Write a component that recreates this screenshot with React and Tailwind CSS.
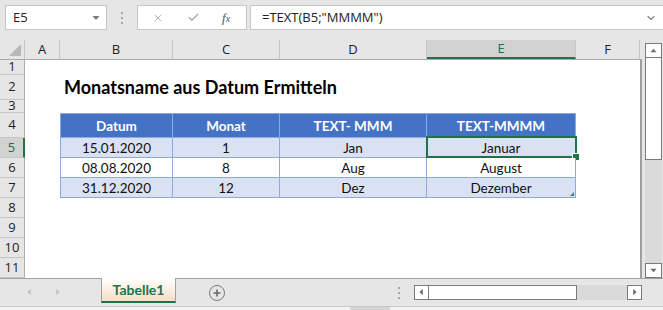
import { X, Check, ChevronDown } from 'lucide-react'

const COLS = [
  { id: 'A', w: 'w-[35px]' },
  { id: 'B', w: 'w-[113px]' },
  { id: 'C', w: 'w-[107px]' },
  { id: 'D', w: 'w-[147px]' },
  { id: 'E', w: 'w-[149px]' },
  { id: 'F', w: 'w-[64px]' },
]

const ROWS = [
  { n: 1, h: 'h-[15px]' },
  { n: 2, h: 'h-[25px]' },
  { n: 3, h: 'h-[13px]' },
  { n: 4, h: 'h-[25px]' },
  { n: 5, h: 'h-[20px]' },
  { n: 6, h: 'h-[20px]' },
  { n: 7, h: 'h-[20px]' },
  { n: 8, h: 'h-[20px]' },
  { n: 9, h: 'h-[20px]' },
  { n: 10, h: 'h-[20px]' },
  { n: 11, h: 'h-[20px]' },
]

const HEAD = ['Datum', 'Monat', 'TEXT- MMM', 'TEXT-MMMM']
const DATA = {
  5: ['15.01.2020', '1', 'Jan', 'Januar'],
  6: ['08.08.2020', '8', 'Aug', 'August'],
  7: ['31.12.2020', '12', 'Dez', 'Dezember'],
}

const ui = { fontFamily: '"Open Sans", "Noto Sans", sans-serif' }
const cellFont = { fontFamily: 'Lato, "Noto Sans", sans-serif' }

function Dots() {
  return (
    <div className="flex flex-col gap-[3px]">
      <div className="h-[2px] w-[2px] bg-[#a6a6a6]" />
      <div className="h-[2px] w-[2px] bg-[#a6a6a6]" />
      <div className="h-[2px] w-[2px] bg-[#a6a6a6]" />
    </div>
  )
}

function Tri({ dir, color = '#6e6e6e', size = 7 }) {
  const pts = {
    up: '0,6 3.5,2 7,6',
    down: '0,2 3.5,6 7,2',
    left: '5,0 1,3.5 5,7',
    right: '2,0 6,3.5 2,7',
  }
  return (
    <svg width={size} height={size} viewBox="0 0 7 8">
      <polygon points={pts[dir]} fill={color} />
    </svg>
  )
}

function TableCell({ col, row, className }) {
  const first = col === 'B'
  const idx = ['B', 'C', 'D', 'E'].indexOf(col)
  if (row === 4) {
    return (
      <div className={`${className} relative flex items-center justify-center pt-[2px] bg-[#4472c4] text-white font-bold border-y border-r border-[#8ea9db] ${first ? 'border-l' : ''}`}>
        {HEAD[idx]}
      </div>
    )
  }
  const shaded = row !== 6
  return (
    <div className={`${className} relative flex items-center justify-center pt-[1px] text-[#111] border-b border-r border-[#8ea9db] ${first ? 'border-l' : ''} ${shaded ? 'bg-[#d9e1f2]' : 'bg-white'}`}>
      {DATA[row][idx]}
      {row === 5 && col === 'E' && (
        <div className="absolute -left-px -top-[2px] -right-[2px] -bottom-px border-2 border-[#217346]">
          <div className="absolute -right-[4px] -bottom-[4px] h-[6px] w-[6px] bg-[#217346] outline outline-1 outline-white" />
        </div>
      )}
      {row === 7 && col === 'E' && (
        <svg className="absolute right-[1px] bottom-[1px]" width="4" height="4" viewBox="0 0 4 4">
          <polygon points="4,0 4,4 0,4" fill="#4472c4" />
        </svg>
      )}
    </div>
  )
}

export default function App() {
  return (
    <div className="w-[663px] h-[310px] overflow-hidden bg-[#e6e6e6] flex flex-col text-[#222]" style={ui}>
      {/* formula bar */}
      <div className="h-[40px] shrink-0 flex items-start pt-[5px] pl-[5px]">
        <div className="w-[102px] h-[25px] bg-white border border-[#c6c6c6] flex items-center pl-[7px] pr-[6px] text-[13px] text-[#222]">
          <span className="flex-1">E5</span>
          <Tri dir="down" color="#7a7a7a" size={8} />
        </div>
        <div className="w-[30px] h-[25px] flex items-center justify-center">
          <Dots />
        </div>
        <div className="w-[110px] h-[25px] bg-white border border-[#c6c6c6] flex items-center">
          <X className="ml-[14px] h-[12px] w-[12px] text-[#a6a6a6]" strokeWidth={1.6} />
          <Check className="ml-[23px] h-[13px] w-[13px] text-[#a6a6a6]" strokeWidth={2.4} />
          <span className="ml-[22px] text-[13px] italic text-[#555]" style={{ fontFamily: '"Liberation Serif", serif' }}>
            f<span className="text-[10px]">x</span>
          </span>
        </div>
        <div className="ml-[3px] flex-1 h-[25px] bg-white border-y border-l border-[#c6c6c6] flex items-center pl-[11px] pr-[6px] text-[13px] text-[#222]">
          <span className="flex-1">=TEXT(B5;"MMMM")</span>
          <ChevronDown className="h-[12px] w-[12px] text-[#808080]" strokeWidth={2.2} />
        </div>
      </div>

      {/* sheet + vertical scrollbar */}
      <div className="flex h-[238px] shrink-0">
        <div className="w-[642px] shrink-0 flex flex-col">
          {/* column headers */}
          <div className="flex h-[20px] shrink-0 border-b border-[#ababab] text-[13px]">
            <div className="w-[25px] shrink-0 relative border-r border-[#c6c6c6] bg-[#e6e6e6]">
              <svg className="absolute right-[3px] bottom-[3px]" width="12" height="12" viewBox="0 0 12 12">
                <polygon points="12,0 12,12 0,12" fill="#b7b7b7" />
              </svg>
            </div>
            {COLS.map(c => (
              <div
                key={c.id}
                className={`${c.w} shrink-0 flex items-center justify-center border-r border-[#c6c6c6] ${c.id === 'E' ? 'bg-[#d2d2d2] text-[#217346] border-b-2 border-b-[#217346]' : 'bg-[#e6e6e6] text-[#222]'}`}
              >
                {c.id}
              </div>
            ))}
          </div>
          {/* rows */}
          <div className="flex-1 flex flex-col border-r-2 border-[#9e9e9e] bg-white text-[13.5px]" style={cellFont}>
            {ROWS.map(r => (
              <div key={r.n} className={`flex ${r.h} shrink-0`}>
                <div
                  className={`w-[25px] shrink-0 flex items-center justify-center border-b border-[#c6c6c6] text-[13px] ${r.n === 5 ? 'bg-[#d2d2d2] text-[#217346] border-r-2 border-r-[#217346]' : 'bg-[#e6e6e6] text-[#222] border-r border-r-[#ababab]'}`}
                  style={ui}
                >
                  {r.n}
                </div>
                {COLS.map(c => {
                  const inTable = r.n >= 4 && r.n <= 7 && c.id !== 'A' && c.id !== 'F'
                  if (inTable) return <TableCell key={c.id} col={c.id} row={r.n} className={`${c.w} shrink-0`} />
                  if (r.n === 2 && c.id === 'B') {
                    return (
                      <div key={c.id} className={`${c.w} shrink-0 flex items-center pl-[4px] whitespace-nowrap overflow-visible font-bold text-[18px] text-black`}>
                        Monatsname aus Datum Ermitteln
                      </div>
                    )
                  }
                  return <div key={c.id} className={`${c.w} shrink-0`} />
                })}
              </div>
            ))}
          </div>
        </div>
        {/* vertical scrollbar */}
        <div className="flex-1 pl-[3px] pt-[3px] flex">
          <div className="w-[17px] flex flex-col">
            <div className="h-[15px] shrink-0 bg-white border border-[#7a7a7a] flex items-center justify-center">
              <Tri dir="up" />
            </div>
            <div className="h-[102px] shrink-0 bg-white border-x border-b border-[#7a7a7a]" />
            <div className="flex-1 bg-[#dadada]" />
            <div className="h-[15px] shrink-0 bg-white border border-[#7a7a7a] flex items-center justify-center">
              <Tri dir="down" />
            </div>
          </div>
        </div>
      </div>

      {/* sheet tabs */}
      <div className="h-[28px] shrink-0 flex items-start border-t border-[#a0a0a0]">
        <div className="w-[101px] h-full flex items-center pl-[26px] gap-[21px]">
          <Tri dir="left" color="#c2c2c2" size={7} />
          <Tri dir="right" color="#c2c2c2" size={7} />
        </div>
        <div className="-mt-px w-[75px] h-[25px] bg-gradient-to-b from-white to-[#fbdcc6] border-x border-[#a0a0a0] border-b-2 border-b-[#217346] flex items-center justify-center font-bold text-[14px] text-[#217346]" style={cellFont}>
          Tabelle1
        </div>
        <div className="ml-[33px] h-full flex items-center">
          <div className="w-[16px] h-[16px] rounded-full border border-[#7a7a7a] flex items-center justify-center text-[#6a6a6a]">
            <svg width="10" height="10" viewBox="0 0 10 10">
              <path d="M5 1.5v7M1.5 5h7" stroke="#6a6a6a" strokeWidth="1.6" />
            </svg>
          </div>
        </div>
        <div className="ml-[173px] h-full flex items-center">
          <Dots />
        </div>
        <div className="ml-[14px] mt-[6px] w-[228px] h-[15px] flex">
          <div className="w-[15px] h-full bg-white border border-[#7a7a7a] flex items-center justify-center">
            <Tri dir="left" />
          </div>
          <div className="w-[148px] h-full bg-white border-y border-r border-[#7a7a7a]" />
          <div className="flex-1 h-full bg-[#dadada]" />
          <div className="w-[15px] h-full bg-white border border-[#7a7a7a] flex items-center justify-center">
            <Tri dir="right" />
          </div>
        </div>
      </div>

      {/* status strip */}
      <div className="flex-1 bg-[#f3f3f3] border-t border-[#c8c8c8] flex">
        <div className="ml-[350px] w-[40px] bg-[#d4d4d4]" />
      </div>
    </div>
  )
}
